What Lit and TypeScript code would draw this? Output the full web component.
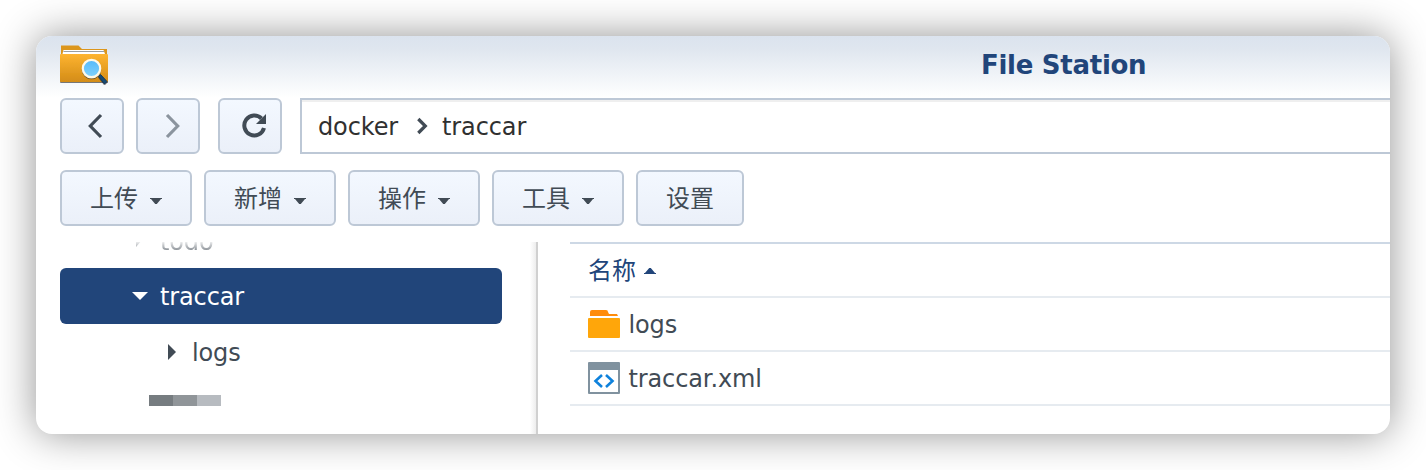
import { LitElement, html, css, svg } from "lit";
import { customElement } from "lit/decorators.js";

const caretDown = svg`<path d="M0 0H12V1H11L6.800 6H5.200L1 1H0Z" fill="currentColor"/>`;

@customElement("app-root")
export class AppRoot extends LitElement {
  static styles = css`
    :host {
      display: block;
      box-sizing: border-box;
      width: 1426px;
      height: 470px;
      padding: 36px;
      overflow: hidden;
      background: #fff;
      font-family: "DejaVu Sans", "Noto Sans CJK SC", sans-serif;
      font-size: 24px;
      line-height: 28px;
      letter-spacing: -0.12px;
      color: #414b55;
    }
    svg { display: block; flex: none; }
    .window {
      height: 398px;
      border-radius: 16px;
      background: #fff;
      box-shadow: 0 0 40px rgba(0, 0, 0, 0.43);
    }
    .clip {
      display: flex;
      flex-direction: column;
      height: 398px;
      border-radius: 16px;
      overflow: hidden;
    }
    .header {
      display: flex;
      height: 62px;
      flex: none;
      background: linear-gradient(#dbe3ee, #dfe6ef 20%, #fff);
    }
    .logo { margin: 6px 0 0 22px; }
    .title {
      margin: 14px 0 0 871px;
      font-size: 26px;
      line-height: 30px;
      font-weight: 700;
      letter-spacing: -0.28px;
      color: #21457a;
      white-space: nowrap;
    }
    .nav { display: flex; height: 56px; flex: none; padding-left: 24px; }
    .btn {
      display: flex;
      align-items: center;
      box-sizing: border-box;
      height: 56px;
      border: 2px solid #bdc8d6;
      border-radius: 6px;
      background: linear-gradient(#f3f8ff, #ebf0f9);
    }
    .sq { width: 64px; }
    .fwd { margin: 0 18px 0 12px; }
    .path {
      display: flex;
      align-items: center;
      box-sizing: border-box;
      flex: 1;
      margin-left: 18px;
      padding-left: 16px;
      border: 2px solid #bdc8d6;
      border-right: 0;
      box-shadow: inset 0 2px #efefef;
      color: #303030;
    }
    .path span, .node span { padding-top: 2px; }
    .sep { margin: 0 13px 0 18px; }
    .tools { display: flex; gap: 12px; flex: none; padding: 16px 0 16px 24px; }
    .tool {
      padding: 0 0 0 28px;
      width: 132px;
      font-family: "Noto Sans CJK SC", sans-serif;
      letter-spacing: 0;
    }
    .tool span { padding-bottom: 2px; }
    .plain { width: 108px; }
    .caret { margin: 6px 0 0 12px; }
    .body { display: flex; flex: 1; min-height: 0; }
    .tree {
      box-sizing: border-box;
      width: 494px;
      padding-left: 24px;
      overflow: hidden;
    }
    .cut {
      display: flex;
      align-items: flex-end;
      height: 8px;
      margin-bottom: 18px;
      overflow: hidden;
      padding-left: 76px;
      -webkit-mask-image: linear-gradient(rgba(0, 0, 0, 0.1), rgba(0, 0, 0, 0.6));
      mask-image: linear-gradient(rgba(0, 0, 0, 0.1), rgba(0, 0, 0, 0.6));
    }
    .cut span { line-height: 28px; margin: 0 0 -6px 18px; }
    .cut svg { margin-bottom: 2px; }
    .node { display: flex; align-items: center; box-sizing: border-box; width: 442px; height: 56px; }
    .sel { padding-left: 72px; gap: 12px; border-radius: 6px; background: #21457a; color: #fff; }
    .child { padding-left: 108px; gap: 16px; }
    .mosaic { display: flex; margin: 15px 0 0 89px; }
    .mosaic i { width: 24px; height: 11px; background: #767c80; }
    .mosaic i:nth-child(2) { background: #909599; }
    .mosaic i:nth-child(3) { background: #b7bbc0; }
    .divider {
      width: 6px;
      border-right: 2px solid #d0d0d0;
      background: linear-gradient(90deg, #fff, #ededed);
    }
    .list { flex: 1; margin-left: 32px; border-top: 2px solid #cdd8e5; }
    .row {
      display: flex;
      align-items: center;
      box-sizing: border-box;
      height: 54px;
      padding-left: 18px;
      border-bottom: 2px solid #e6ebf0;
      gap: 8px;
    }
    .row span { padding: 1px 0 0 0.5px; }
    .head { color: #21457a; font-family: "Noto Sans CJK SC", sans-serif; letter-spacing: 0; }
    .head span { padding: 0 0 2px; }
    .head svg { margin-top: 2px; }
  `;

  private tool(label: string, menu = true) {
    return html`<div class="btn tool ${menu ? "" : "plain"}">
      <span>${label}</span>${menu
        ? html`<svg class="caret" width="12" height="6">${caretDown}</svg>`
        : ""}
    </div>`;
  }

  render() {
    return html`<div class="window"><div class="clip">
      <div class="header">
        <svg class="logo" width="52" height="46" viewBox="0 0 52 46">
          <defs>
            <linearGradient id="f" x2="0" y2="1"><stop stop-color="#feb430"/><stop offset="1" stop-color="#d38c18"/></linearGradient>
            <linearGradient id="g" x2="0" y2="1"><stop stop-color="#55b9fa"/><stop offset="1" stop-color="#80d2fd"/></linearGradient>
            <filter id="s" x="-20%" y="-20%" width="140%" height="150%"><feDropShadow dx="0" dy="1" stdDeviation=".7" flood-color="#333" flood-opacity=".65"/></filter>
          </defs>
          <g filter="url(#s)">
            <path d="M3 12V3.500H20.500L24 7H49V14H3Z" fill="#dc961f"/>
            <path d="M5.500 8H45.500L47 12H4.500Z" fill="#fff"/>
            <path d="M5.500 9.500H46" stroke="#9a9ea2" stroke-width="1"/>
            <rect x="2" y="12" width="48" height="28" rx="1" fill="url(#f)"/>
          </g>
          <g filter="url(#s)">
            <path d="M40.500 34.500L42.500 32.500L49 39.500L46.500 42Z" fill="#174b74" stroke="#12395a" stroke-width="1"/>
            <circle cx="33.500" cy="26.500" r="8.700" fill="url(#g)" stroke="#fff9e8" stroke-width="2.200"/>
          </g>
        </svg>
        <div class="title">File Station</div>
      </div>
      <div class="nav">
        <div class="btn sq"><svg width="60" height="52"><path d="M39 15L28.300 26L39 37" fill="none" stroke="#414b55" stroke-width="3.200"/></svg></div>
        <div class="btn sq fwd"><svg width="60" height="52"><path d="M29 15L39.700 26L29 37" fill="none" stroke="#8b949e" stroke-width="3.200"/></svg></div>
        <div class="btn sq"><svg width="60" height="52"><path d="M41.500 18.500A10 10 0 1 0 44 28" fill="none" stroke="#414b55" stroke-width="4"/><path d="M46 14V24H36Z" fill="#414b55"/></svg></div>
        <div class="path"><span>docker</span><svg class="sep" width="13" height="18"><path d="M2.300 2L9.300 9L2.300 16" fill="none" stroke="#414b55" stroke-width="3.200"/></svg><span>traccar</span></div>
      </div>
      <div class="tools">
        ${this.tool("上传")}${this.tool("新增")}${this.tool("操作")}${this.tool("工具")}${this.tool("设置", false)}
      </div>
      <div class="body">
        <div class="tree">
          <div class="cut"><svg width="6" height="16"><path d="M0 0V15L6 8Z" fill="#414b55"/></svg><span>todo</span></div>
          <div class="node sel"><svg width="16" height="8"><path d="M0 0H16L8 8Z" fill="#fff"/></svg><span>traccar</span></div>
          <div class="node child"><svg width="8" height="16"><path d="M0 0V16L8 8Z" fill="#414b55"/></svg><span>logs</span></div>
          <div class="mosaic"><i></i><i></i><i></i></div>
        </div>
        <div class="divider"></div>
        <div class="list">
          <div class="row head"><span>名称</span><svg width="12" height="6"><path d="M5.200 0H6.800L11 5H12V6H0V5H1Z" fill="#21457a"/></svg></div>
          <div class="row"><svg width="32" height="28"><path d="M2 6V2Q2 0 4 0H18Q20 0 20 2L21 4H29L30 6Z" fill="#ff8c0a"/><rect y="8" width="32" height="20" rx="1" fill="#ffa60a"/></svg><span>logs</span></div>
          <div class="row"><svg width="32" height="32"><rect width="32" height="32" rx="1" fill="#80929f"/><path d="M2 8H30V30H2Z" fill="#fff"/><path d="M14 13L7.500 19L14 25M18 13L24.500 19L18 25" fill="none" stroke="#0f82dc" stroke-width="2.600"/></svg><span>traccar.xml</span></div>
        </div>
      </div>
    </div></div>`;
  }
}
